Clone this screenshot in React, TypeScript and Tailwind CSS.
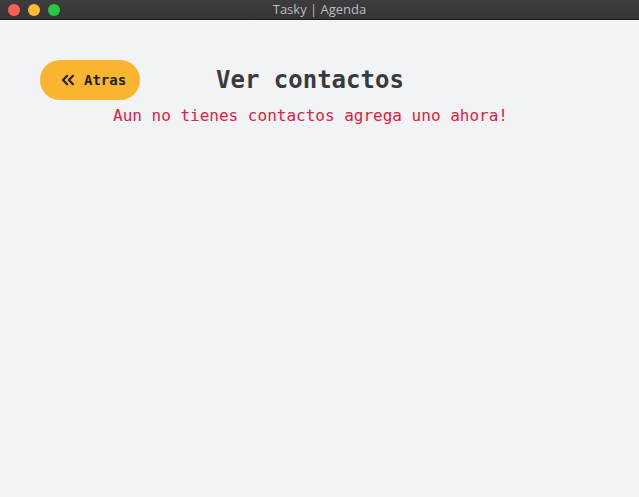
import React from "react";

export default function App() {
  return (
    <div className="w-[639px] h-[497px] bg-[#f2f3f5] flex flex-col overflow-hidden" style={{ fontFamily: '"DejaVu Sans Mono", "Liberation Mono", monospace' }}>
      <div className="h-[20px] shrink-0 bg-gradient-to-b from-[#3d3d3d] to-[#353535] border-b border-[#1e1e1e] relative flex items-center">
        <div className="flex items-center gap-[8px] pl-[8px]">
          <span className="w-[12px] h-[12px] rounded-full bg-[#fe5f57]" />
          <span className="w-[12px] h-[12px] rounded-full bg-[#febc2e]" />
          <span className="w-[12px] h-[12px] rounded-full bg-[#28c840]" />
        </div>
        <div className="absolute inset-0 flex items-center justify-center text-[13px] text-[#bdbdbd]" style={{ fontFamily: '"Open Sans", "Liberation Sans", sans-serif' }}>
          Tasky | Agenda
        </div>
      </div>
      <div className="flex flex-col pt-[40px] pl-[40px]">
        <div className="flex items-center">
          <button className="w-[100px] h-[40px] rounded-full bg-[#f9b52f] flex items-center pl-[18px] gap-[6px] text-[14px] font-bold text-[#1f1f24]">
            <svg width="20" height="20" viewBox="0 0 24 24" fill="none" stroke="currentColor" strokeWidth="2.5" strokeLinecap="round" strokeLinejoin="round">
              <path d="m11 17-5-5 5-5" />
              <path d="m18 17-5-5 5-5" />
            </svg>
            <span>Atras</span>
          </button>
          <h1 className="ml-[76px] text-[24px] font-bold text-[#393a40]">Ver contactos</h1>
        </div>
        <p className="ml-[73px] mt-[6px] text-[16px] leading-[20px] text-[#e0203f]">Aun no tienes contactos agrega uno ahora!</p>
      </div>
    </div>
  );
}
